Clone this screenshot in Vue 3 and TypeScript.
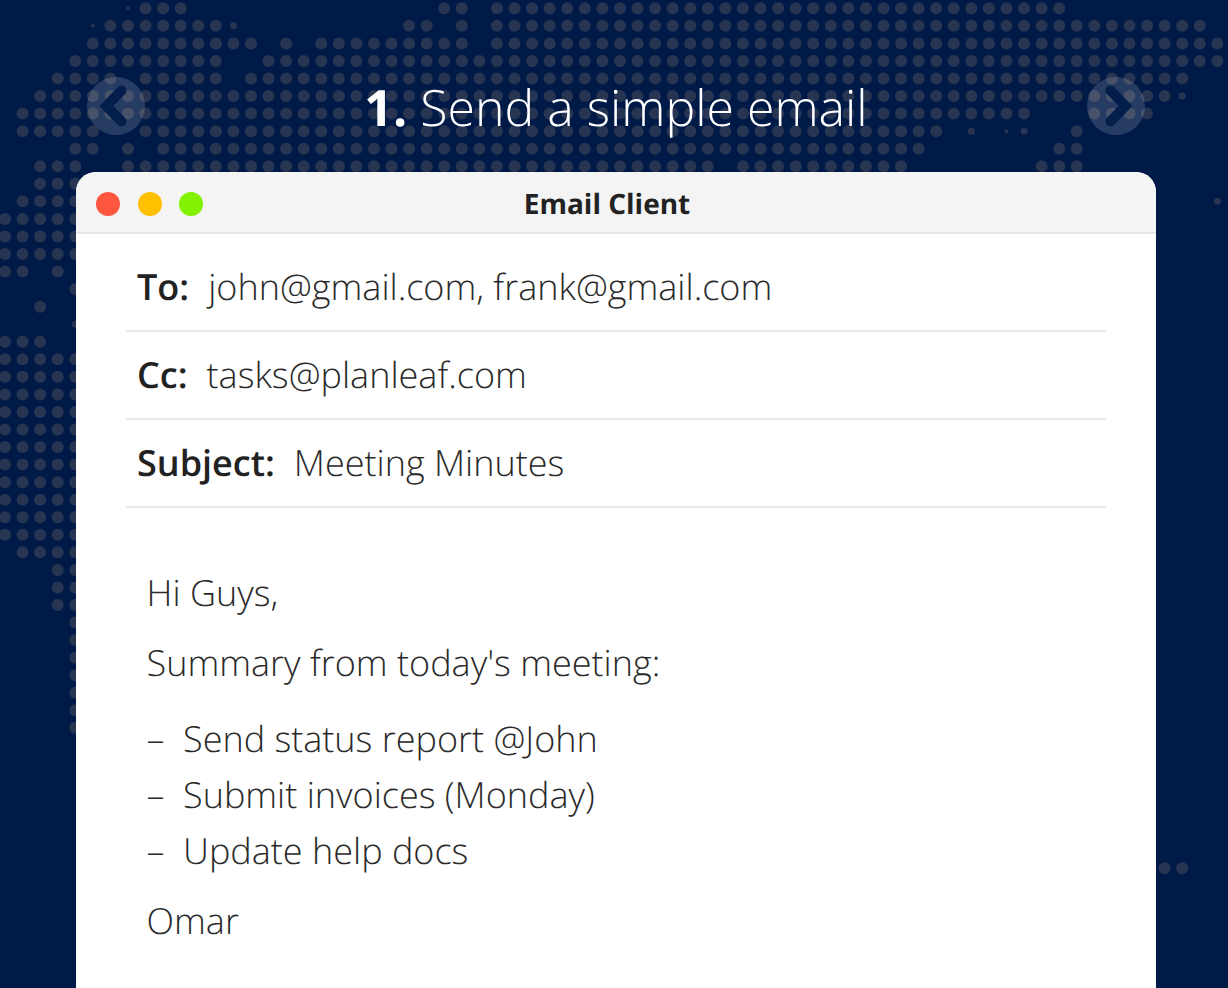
<template>
  <div class="page">
    <svg class="world" width="1228" height="988" viewBox="0 0 1228 988" aria-hidden="true">
      <circle v-for="d in dots" :key="d.key" :cx="d.x" :cy="d.y" :r="d.r" />
    </svg>

    <header class="heading">
      <button class="nav-btn" aria-label="Previous">
        <svg width="58" height="58" viewBox="0 0 58 58"><path d="M34.500 13.500 L19.500 29 L34.500 44.500" /></svg>
      </button>
      <h1><b>1.</b> Send a simple email</h1>
      <button class="nav-btn" aria-label="Next">
        <svg width="58" height="58" viewBox="0 0 58 58"><path d="M23.500 13.500 L38.500 29 L23.500 44.500" /></svg>
      </button>
    </header>

    <section class="window">
      <div class="titlebar">
        <div class="lights">
          <span class="light red"></span>
          <span class="light amber"></span>
          <span class="light green"></span>
        </div>
        <span class="title">Email Client</span>
      </div>

      <div class="fields">
        <div v-for="f in fields" :key="f.label" class="field">
          <b>{{ f.label }}</b><span>{{ f.value }}</span>
        </div>
      </div>

      <div class="body">
        <p>Hi Guys,</p>
        <p>Summary from today's meeting:</p>
        <ul>
          <li v-for="t in tasks" :key="t"><i>–</i>{{ t }}</li>
        </ul>
        <p>Omar</p>
      </div>
    </section>
  </div>
</template>

<script setup lang="ts">
interface Dot { key: string; x: number; y: number; r: number }

// dotted world map: each row lists the columns that are lit, t/s = tiny/small dot
const rows: Record<number, string> = {
  0: '7t,8-10,25-26,28-60',
  1: '5t,6-12,13s,23-24,26,28-68',
  2: '5-14,16,18-26,28-69',
  3: '4-12,15-69',
  4: '3-6,8-12,14-67',
  5: '2-66,67s',
  6: '1-58,62-65',
  7: '1-5,8-53,55s,57t,58s,61',
  8: '4-5,7,9-52,60-61',
  9: '2-4,7-40,42-51,59-61',
  10: '2-4',
  11: '1-4,69s',
  12: '0-4',
  13: '0-4',
  14: '0-4',
  15: '0-1,3',
  16: '4',
  17: '2',
  18: '4s',
  19: '0-2',
  31: '1-4',
  32: '3-4',
  33: '3-4',
  34: '3-4',
  49: '66-67',
}
for (let r = 20; r <= 30; r++) rows[r] = '0-4'
for (let r = 35; r <= 41; r++) rows[r] = '4'

const radius: Record<string, number> = { t: 2, s: 3.5 }

const dots: Dot[] = []
for (const [row, spec] of Object.entries(rows)) {
  for (const part of spec.split(',')) {
    const m = part.match(/^(\d+)(?:-(\d+))?([ts]?)$/)
    if (!m) continue
    const from = Number(m[1])
    const to = m[2] ? Number(m[2]) : from
    for (let c = from; c <= to; c++) {
      dots.push({
        key: `${row}-${c}`,
        x: 5 + c * 17.57,
        y: 8.3 + Number(row) * 17.55,
        r: radius[m[3]] ?? 6,
      })
    }
  }
}

const fields = [
  { label: 'To:', value: 'john@gmail.com, frank@gmail.com' },
  { label: 'Cc:', value: 'tasks@planleaf.com' },
  { label: 'Subject:', value: 'Meeting Minutes' },
]

const tasks = ['Send status report @John', 'Submit invoices (Monday)', 'Update help docs']
</script>

<style>
html, body { background: #001a48; }
</style>

<style scoped>
.page {
  position: relative;
  height: 988px;
  overflow: hidden;
  background: #001a48;
  font-family: "Open Sans", "Noto Sans", sans-serif;
  text-rendering: geometricPrecision;
  color: #2a2a2a;
  display: flex;
  flex-direction: column;
}

.world { position: absolute; top: 0; left: 0; filter: blur(0.6px); }
.world circle { fill: #283552; }

.heading {
  position: relative;
  height: 172px;
  flex-shrink: 0;
  padding: 77px 83px 0 87px;
  box-sizing: border-box;
  display: flex;
  align-items: flex-start;
  justify-content: space-between;
}
.heading h1 {
  margin: -2px 0 0 0;
  font-size: 50px;
  line-height: 65px;
  font-weight: 300;
  color: #fff;
  white-space: nowrap;
}
.heading h1 b { font-weight: 700; }

.nav-btn {
  width: 58px;
  height: 58px;
  padding: 0;
  border: none;
  border-radius: 50%;
  background: rgba(255, 255, 255, 0.15);
  flex-shrink: 0;
}
.nav-btn svg { display: block; }
.nav-btn path {
  fill: none;
  stroke: #041e4c;
  stroke-width: 10;
  stroke-linecap: round;
  stroke-linejoin: miter;
}

.window {
  position: relative;
  width: 1080px;
  margin-left: 76px;
  flex: 1;
  background: #fff;
  border-radius: 20px 20px 0 0;
}

.titlebar {
  position: relative;
  height: 62px;
  box-sizing: border-box;
  padding: 4px 18px 0 0;
  background: #f4f4f4;
  border-bottom: 2px solid #e6e6e6;
  border-radius: 20px 20px 0 0;
  display: flex;
  align-items: center;
  justify-content: center;
}
.lights {
  position: absolute;
  left: 20.3px;
  top: 20px;
  display: flex;
  gap: 17.3px;
}
.light { width: 24px; height: 24px; border-radius: 50%; }
.light.red { background: #ff5640; }
.light.amber { background: #ffc000; }
.light.green { background: #82f200; }
.title { font-size: 28px; font-weight: 700; color: #222; }

.fields { padding: 10px 50px 0; }
.field {
  height: 88px;
  box-sizing: border-box;
  padding: 0 11px 2px;
  border-bottom: 2px solid #e8e8e8;
  display: flex;
  align-items: center;
  gap: 19px;
  font-size: 36px;
  font-weight: 300;
}
.field b { font-weight: 600; color: #222; }

.body {
  padding: 57px 70.5px 0;
  font-size: 36px;
  font-weight: 300;
  line-height: 56px;
}
.body p { margin: 0 0 14px; }
.body ul { margin: 20px 0 14px; padding: 0; list-style: none; }
.body li { display: flex; }
.body li i { width: 36.5px; font-style: normal; }
</style>
